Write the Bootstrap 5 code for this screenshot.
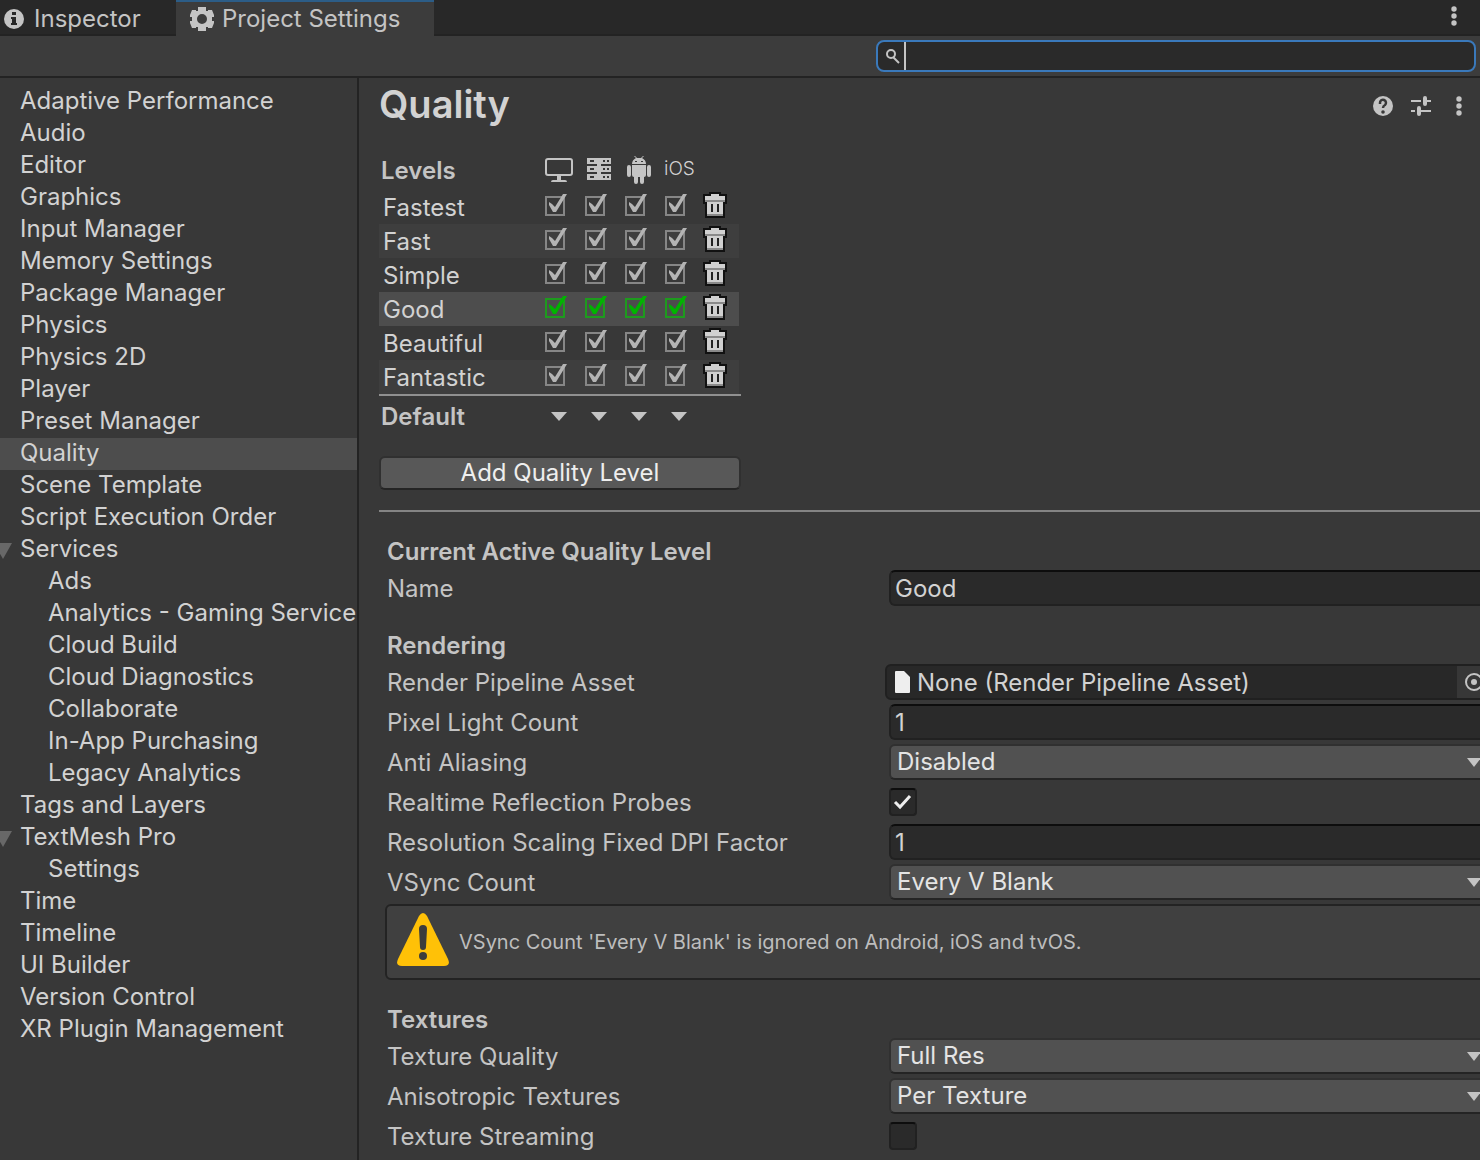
<!DOCTYPE html>
<html lang="en" data-bs-theme="dark">
<head>
<meta charset="utf-8">
<meta name="viewport" content="width=device-width, initial-scale=1">
<title>Project Settings</title>
<link href="https://cdn.jsdelivr.net/npm/bootstrap@5.3.0/dist/css/bootstrap.min.css" rel="stylesheet">
<style>
:root{--edge:#232323;--panel:#383838;--bar:#3c3c3c;--well:#2a2a2a;--text:#d2d2d2;--dim:#c4c4c4;--pick:#4d4d4d}
body{font-family:Inter,"Liberation Sans",sans-serif;font-size:24px;line-height:32px;background:var(--panel);color:var(--text)}
button,input,select{font:inherit;color:inherit}
svg{display:block;flex:none}
.app{min-height:100vh;overflow:hidden}
.tabstrip{height:36px;background:#282828;box-shadow:inset 0 -2px var(--edge)}
.tab{height:36px;border:0;background:none;color:var(--dim)}
.tab-idle{width:176px;padding:2px 0 0 4px;gap:10px}
.tab-open{width:258px;padding:0 0 0 14px;background:var(--bar);border-top:2px solid #2c5d87;line-height:30px}
.icon-btn{border:0;background:none;padding:0;color:var(--dim)}
.toolbar{height:42px;background:var(--bar);border-bottom:2px solid var(--edge);padding:0 4px 0 0}
.finder{width:600px;height:32px;border:2px solid #3a79bb;border-radius:8px;background:var(--well);padding:0 8px}
.finder input{border:0;outline:0;background:none;height:28px;flex:1;min-width:0;padding:0;caret-color:transparent}
.caret{width:2px;height:28px;background:var(--dim)}
.side{width:359px;flex:none;border-right:2px solid var(--edge);padding-top:8px}
.side a{display:block;height:32px;line-height:30px;padding-left:20px;color:var(--text);text-decoration:none;white-space:nowrap;position:relative}
.side ul ul a{padding-left:48px}
.side a.current{background:var(--pick)}
.fold::before{content:"";position:absolute;left:-6px;top:9px;border:9px solid transparent;border-top:16px solid #686868;border-bottom:0}
.content{padding:2px 0 0 20px;min-width:0;overflow:hidden}
.wide{margin-right:-8px}
h1{font-size:38px;line-height:48px;font-weight:600;margin:0;color:var(--text)}
.heading{padding-right:11px}
.heading-tools{gap:18px}
.levels{width:360px;table-layout:fixed;border-collapse:collapse}
.levels th,.levels td{padding:0;height:34px;vertical-align:top}
.levels .head th{height:38px;line-height:38px}
.levels .head svg{margin-top:4px}
.levels tbody th{font-weight:400;padding:2px 0 0 4px;line-height:32px}
.levels .alt{background:#3e3e3e}
.levels .chosen{background:var(--pick)}
.levels .head .os{font-size:19px;font-weight:300;padding-left:5px;line-height:34px}
.tick{appearance:none;display:block;width:22px;height:22px;margin:4px 0 0 6px;background:url("data:image/svg+xml,%3Csvg xmlns='http://www.w3.org/2000/svg' viewBox='0 0 22 22'%3E%3Cpath d='M1 3h18v18H1z' fill='none' stroke='%23868686' stroke-width='2'/%3E%3Cpath d='M4 8l3 2 3 3L18 0h4L11 18H8L4 11z' fill='%23b4b4b4'/%3E%3C/svg%3E")}
.chosen .tick{background-image:url("data:image/svg+xml,%3Csvg xmlns='http://www.w3.org/2000/svg' viewBox='0 0 22 22'%3E%3Cpath d='M1 3h18v18H1z' fill='none' stroke='%231e9a1e' stroke-width='2'/%3E%3Cpath d='M4 8l3 2 3 3L18 0h4L11 18H8L4 11z' fill='%2300b400'/%3E%3C/svg%3E")}
.bin{display:block;margin:2px 0 0 4px}
.defaults{width:362px;border-top:2px solid #909090;height:42px}
.defaults strong{width:160px;padding:2px 0 0 2px}
.defaults strong,.levels .head .title,.group{font-weight:600;color:var(--dim)}
.levels .head .title{padding-left:2px}
.pick-default{width:40px;height:40px;border:0;background:none;padding:0 0 0 12px}
.tri{width:0;height:0;border:8px solid transparent;border-top:9px solid var(--dim);border-bottom:0;display:block}
.add{display:block;width:362px;height:34px;margin:20px 0;border:2px solid #303030;border-bottom-color:#242424;border-radius:6px;background:#585858;color:#eee;line-height:30px;padding:0}
.rule{height:2px;background:#848484;margin-bottom:22px}
.group{font-size:24px;line-height:32px;margin:0;padding:2px 0 0 8px}
.gap-above{margin-top:20px}
.prop{height:40px;padding-left:8px}
.prop label{width:502px;flex:none;color:var(--dim);line-height:38px;padding-top:2px}
.field{height:36px;min-width:0;flex:1;background:var(--well);border:2px solid #212121;border-top-color:#0d0d0d;border-radius:6px;padding:0 4px;outline:0}
.drop{appearance:none;height:36px;min-width:0;flex:1;border:2px solid #303030;border-bottom-color:#242424;border-radius:6px;padding:0 6px;color:#e4e4e4;line-height:30px;background:#515151 url("data:image/svg+xml,%3Csvg xmlns='http://www.w3.org/2000/svg' width='14' height='9'%3E%3Cpath d='M0 0h14L7 9z' fill='%23c4c4c4'/%3E%3C/svg%3E") no-repeat right 5px top 12px}
.objfield{height:36px;flex:1;min-width:0;margin-left:-4px;background:#282828;border:2px solid #202020;border-radius:6px;padding-left:8px}
.objfield input{border:0;outline:0;background:none;height:32px;flex:1;min-width:0;padding:2px 0 0 7px}
.objfield button{width:29px;height:32px;background:#373737;padding-left:8px}
.box{appearance:none;width:28px;height:28px;background:var(--well);border:2px solid #212121;border-top-color:#0d0d0d;border-radius:4px}
.box:checked{background:var(--well) url("data:image/svg+xml,%3Csvg xmlns='http://www.w3.org/2000/svg' width='24' height='24'%3E%3Cpath d='M4 12l5 5L19 6' fill='none' stroke='%23eee' stroke-width='3'/%3E%3C/svg%3E")}
.note{margin:2px 0 22px 6px;height:76px;background:#404040;border:2px solid var(--edge);border-radius:6px;padding-left:10px;gap:10px;font-size:20px;color:#bdbdbd}
</style>
</head>
<body>
<svg class="d-none">
<symbol id="dots" viewBox="0 0 20 20"><circle cx="10" cy="3" r="2.700"/><circle cx="10" cy="10" r="2.700"/><circle cx="10" cy="17" r="2.700"/></symbol>
<symbol id="trash" viewBox="0 0 24 26"><path d="M6 0h12v2h6v10h-2v14H2V12H0V2h6z" fill="#111"/><path d="M8 2h8v2h6v4H2V4h6zM4 10h16v14H4z" fill="#d0d0d0"/><path d="M2 8h20v2H2zM4 22h16v2H4z" fill="#8a8a8a"/><path d="M8 12h2v8H8zM14 12h2v8h-2z" fill="#222"/></symbol>
</svg>
<div class="app d-flex flex-column">
<div class="tabstrip d-flex">
<button class="tab tab-idle d-flex align-items-center"><svg width="20" height="20" viewBox="0 0 20 20"><circle cx="10" cy="10" r="10" fill="#c4c4c4"/><path d="M8 3h4v3H8zM7 8h5v6h1v2H7v-2h1v-4H7z" fill="#282828"/></svg><span>Inspector</span></button>
<button class="tab tab-open d-flex align-items-center gap-2"><svg width="24" height="24" viewBox="0 0 24 24"><path fill="#c4c4c4" fill-rule="evenodd" d="M8 0h8v4h2V3h4l2 5v2h-2v4h2v2l-2 5h-4v-1h-2v4H8v-4H6v1H2l-2-5v-2h2v-4H0V8l2-5h4v1h2zM12 7a5 5 0 1 0 0 10a5 5 0 0 0 0-10z"/></svg><span>Project Settings</span></button>
<button class="icon-btn ms-auto pb-1 me-3" aria-label="Window menu"><svg width="20" height="20" fill="currentColor"><use href="#dots"/></svg></button>
</div>
<div class="toolbar d-flex align-items-center justify-content-end">
<div class="finder d-flex align-items-center"><svg width="14" height="16" viewBox="0 0 14 16" fill="none" stroke="#c4c4c4" stroke-width="2"><circle cx="5" cy="6" r="4"/><path d="M7 9l6 6"/></svg><span class="caret ms-1"></span><input type="text" aria-label="Search settings"></div>
</div>
<div class="d-flex flex-grow-1">
<nav class="side" aria-label="Settings"><ul class="list-unstyled m-0">
<li><a href="#">Adaptive Performance</a></li><li><a href="#">Audio</a></li><li><a href="#">Editor</a></li><li><a href="#">Graphics</a></li><li><a href="#">Input Manager</a></li><li><a href="#">Memory Settings</a></li><li><a href="#">Package Manager</a></li><li><a href="#">Physics</a></li><li><a href="#">Physics 2D</a></li><li><a href="#">Player</a></li><li><a href="#">Preset Manager</a></li><li><a href="#" class="current">Quality</a></li><li><a href="#">Scene Template</a></li><li><a href="#">Script Execution Order</a></li>
<li><a href="#" class="fold">Services</a><ul class="list-unstyled"><li><a href="#">Ads</a></li><li><a href="#">Analytics - Gaming Service</a></li><li><a href="#">Cloud Build</a></li><li><a href="#">Cloud Diagnostics</a></li><li><a href="#">Collaborate</a></li><li><a href="#">In-App Purchasing</a></li><li><a href="#">Legacy Analytics</a></li></ul></li>
<li><a href="#">Tags and Layers</a></li>
<li><a href="#" class="fold">TextMesh Pro</a><ul class="list-unstyled"><li><a href="#">Settings</a></li></ul></li>
<li><a href="#">Time</a></li><li><a href="#">Timeline</a></li><li><a href="#">UI Builder</a></li><li><a href="#">Version Control</a></li><li><a href="#">XR Plugin Management</a></li>
</ul></nav>
<main class="content flex-grow-1">
<header class="heading d-flex align-items-center mb-4"><h1 class="me-auto">Quality</h1>
<div class="heading-tools d-flex align-items-center pt-1">
<button class="icon-btn" aria-label="Help"><svg width="20" height="20" viewBox="0 0 20 20"><circle cx="10" cy="10" r="10" fill="#c4c4c4"/><path d="M7 8V7a3 3 0 1 1 5 2q-2 1-2 3" fill="none" stroke="#383838" stroke-width="2.5"/><circle cx="10" cy="16" r="1.800" fill="#383838"/></svg></button>
<button class="icon-btn" aria-label="Presets"><svg width="20" height="20" viewBox="0 0 20 20" fill="none" stroke="#c4c4c4" stroke-width="2"><path d="M0 5h10M14 5h6M0 15h4M8 15h12"/><path d="M14 2v6M8 12v6" stroke-width="4" stroke-linecap="round"/></svg></button>
<button class="icon-btn" aria-label="More"><svg width="20" height="20" fill="currentColor"><use href="#dots"/></svg></button>
</div></header>
<table class="levels">
<colgroup><col style="width:160px"><col span="5" style="width:40px"></colgroup>
<thead><tr class="head"><th class="title" scope="col">Levels</th>
<th scope="col" aria-label="Desktop"><svg class="ms-1" width="32" height="28" viewBox="-2 -2 32 28"><rect x="1" y="1" width="26" height="16" rx="2" fill="none" stroke="#c4c4c4" stroke-width="2"/><path d="M12 18h4v4h4q2 0 2 2H6q0-2 2-2h4z" fill="#c4c4c4"/></svg></th>
<th scope="col" aria-label="Server"><svg class="ms-2" width="24" height="28" viewBox="0 -2 24 28"><path fill="#c4c4c4" fill-rule="evenodd" d="M0 0h24v6H14v2h10v6H14v2h10v6H0v-6h10v-2H0V8h10V6H0zM3 2v2h4V2zM16 2v2h2V2zM20 2v2h2V2zM3 10v2h4v-2zM16 10v2h2v-2zM20 10v2h2v-2zM3 18v2h4v-2zM16 18v2h2v-2zM20 18v2h2v-2z"/></svg></th>
<th scope="col" aria-label="Android"><svg class="ms-2" width="24" height="28" viewBox="0 0 24 28"><path d="M5 8q0-4 4-6L7 0h1l2 2h4l2-2h1l-2 2q4 2 4 6zM5 9h14v10q0 2-2 2v5q0 2-2 2t-2-2v-5h-2v5q0 2-2 2t-2-2v-5q-2 0-2-2zM0 11q0-2 2-2t2 2v8q0 2-2 2t-2-2zM20 11q0-2 2-2t2 2v8q0 2-2 2t-2-2z" fill="#c4c4c4"/><path d="M8 5h2v1H8zM14 5h2v1h-2z" fill="#383838"/></svg></th>
<th class="os" scope="col">iOS</th><th></th></tr></thead>
<tbody>
<tr><th scope="row">Fastest</th><td><input class="tick" type="checkbox" checked aria-label="Fastest on desktop"></td><td><input class="tick" type="checkbox" checked aria-label="Fastest on server"></td><td><input class="tick" type="checkbox" checked aria-label="Fastest on Android"></td><td><input class="tick" type="checkbox" checked aria-label="Fastest on iOS"></td><td><button class="icon-btn bin" aria-label="Delete Fastest"><svg width="24" height="26"><use href="#trash"/></svg></button></td></tr>
<tr class="alt"><th scope="row">Fast</th><td><input class="tick" type="checkbox" checked aria-label="Fast on desktop"></td><td><input class="tick" type="checkbox" checked aria-label="Fast on server"></td><td><input class="tick" type="checkbox" checked aria-label="Fast on Android"></td><td><input class="tick" type="checkbox" checked aria-label="Fast on iOS"></td><td><button class="icon-btn bin" aria-label="Delete Fast"><svg width="24" height="26"><use href="#trash"/></svg></button></td></tr>
<tr><th scope="row">Simple</th><td><input class="tick" type="checkbox" checked aria-label="Simple on desktop"></td><td><input class="tick" type="checkbox" checked aria-label="Simple on server"></td><td><input class="tick" type="checkbox" checked aria-label="Simple on Android"></td><td><input class="tick" type="checkbox" checked aria-label="Simple on iOS"></td><td><button class="icon-btn bin" aria-label="Delete Simple"><svg width="24" height="26"><use href="#trash"/></svg></button></td></tr>
<tr class="chosen"><th scope="row">Good</th><td><input class="tick" type="checkbox" checked aria-label="Good on desktop"></td><td><input class="tick" type="checkbox" checked aria-label="Good on server"></td><td><input class="tick" type="checkbox" checked aria-label="Good on Android"></td><td><input class="tick" type="checkbox" checked aria-label="Good on iOS"></td><td><button class="icon-btn bin" aria-label="Delete Good"><svg width="24" height="26"><use href="#trash"/></svg></button></td></tr>
<tr><th scope="row">Beautiful</th><td><input class="tick" type="checkbox" checked aria-label="Beautiful on desktop"></td><td><input class="tick" type="checkbox" checked aria-label="Beautiful on server"></td><td><input class="tick" type="checkbox" checked aria-label="Beautiful on Android"></td><td><input class="tick" type="checkbox" checked aria-label="Beautiful on iOS"></td><td><button class="icon-btn bin" aria-label="Delete Beautiful"><svg width="24" height="26"><use href="#trash"/></svg></button></td></tr>
<tr class="alt"><th scope="row">Fantastic</th><td><input class="tick" type="checkbox" checked aria-label="Fantastic on desktop"></td><td><input class="tick" type="checkbox" checked aria-label="Fantastic on server"></td><td><input class="tick" type="checkbox" checked aria-label="Fantastic on Android"></td><td><input class="tick" type="checkbox" checked aria-label="Fantastic on iOS"></td><td><button class="icon-btn bin" aria-label="Delete Fantastic"><svg width="24" height="26"><use href="#trash"/></svg></button></td></tr>
</tbody></table>
<div class="defaults d-flex align-items-center"><strong>Default</strong><button class="pick-default" aria-label="Desktop default"><span class="tri"></span></button><button class="pick-default" aria-label="Server default"><span class="tri"></span></button><button class="pick-default" aria-label="Android default"><span class="tri"></span></button><button class="pick-default" aria-label="iOS default"><span class="tri"></span></button></div>
<button class="add">Add Quality Level</button>
<div class="rule"></div>
<form class="wide">
<h2 class="group">Current Active Quality Level</h2>
<div class="prop d-flex align-items-center"><label for="name">Name</label><input class="field" id="name" type="text" value="Good"></div>
<h2 class="group gap-above">Rendering</h2>
<div class="prop d-flex align-items-center"><label for="asset">Render Pipeline Asset</label><div class="objfield d-flex align-items-center"><svg width="15" height="22" viewBox="0 0 15 22"><path d="M1 0h8l6 6v15q0 1-1 1H1q-1 0-1-1V1q0-1 1-1z" fill="#eee"/></svg><input id="asset" type="text" readonly value="None (Render Pipeline Asset)"><button type="button" class="icon-btn" aria-label="Select asset"><svg width="18" height="18" viewBox="0 0 18 18"><circle cx="9" cy="9" r="8" fill="none" stroke="#c4c4c4" stroke-width="2"/><circle cx="9" cy="9" r="3" fill="#c4c4c4"/></svg></button></div></div>
<div class="prop d-flex align-items-center"><label for="lights">Pixel Light Count</label><input class="field" id="lights" type="text" value="1"></div>
<div class="prop d-flex align-items-center"><label for="aa">Anti Aliasing</label><select class="drop" id="aa"><option>Disabled</option></select></div>
<div class="prop d-flex align-items-center"><label for="probes">Realtime Reflection Probes</label><input class="box" id="probes" type="checkbox" checked></div>
<div class="prop d-flex align-items-center"><label for="dpi">Resolution Scaling Fixed DPI Factor</label><input class="field" id="dpi" type="text" value="1"></div>
<div class="prop d-flex align-items-center"><label for="vsync">VSync Count</label><select class="drop" id="vsync"><option>Every V Blank</option></select></div>
<div class="note d-flex align-items-center" role="note"><svg class="mb-1" width="52" height="54" viewBox="0 0 52 54"><path d="M22 3q4-6 8 0l21 43q3 7-4 7H5q-7 0-4-7z" fill="#ffc107"/><path d="M22 16q0-4 4-4t4 4l-1 18q0 3-3 3t-3-3z" fill="#3c3c3c"/><circle cx="26" cy="43" r="4" fill="#3c3c3c"/></svg><span>VSync Count 'Every V Blank' is ignored on Android, iOS and tvOS.</span></div>
<h2 class="group">Textures</h2>
<div class="prop d-flex align-items-center"><label for="tex">Texture Quality</label><select class="drop" id="tex"><option>Full Res</option></select></div>
<div class="prop d-flex align-items-center"><label for="aniso">Anisotropic Textures</label><select class="drop" id="aniso"><option>Per Texture</option></select></div>
<div class="prop d-flex align-items-center"><label for="stream">Texture Streaming</label><input class="box" id="stream" type="checkbox"></div>
</form>
</main>
</div>
</div>
<script src="https://cdn.jsdelivr.net/npm/bootstrap@5.3.0/dist/js/bootstrap.bundle.min.js"></script>
</body>
</html>
